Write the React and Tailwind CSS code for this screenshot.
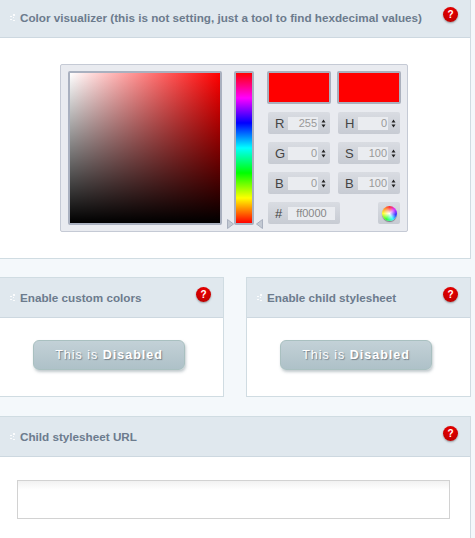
const Grip = () => (
  <svg width="5" height="7" viewBox="0 0 5 7" className="shrink-0 mr-[5px]">
    <rect x="0" y="2" width="2" height="1" fill="#fbfcfd" />
    <rect x="3" y="0" width="2" height="2" fill="#fbfcfd" />
    <rect x="3" y="3" width="1" height="1" fill="#fbfcfd" />
    <rect x="0" y="5" width="2" height="1" fill="#fbfcfd" />
    <rect x="3" y="6" width="2" height="1" fill="#fbfcfd" />
  </svg>
);

const Help = () => (
  <div className="ml-auto mr-[12px] mt-[-6px] w-[15px] h-[15px] rounded-full shrink-0 flex items-center justify-center bg-[radial-gradient(circle_at_50%_30%,#ee0000,#c40000_70%,#8f0000)] text-white text-[10px] font-bold leading-none shadow-[0_1px_2px_rgba(0,0,0,0.35)]">
    ?
  </div>
);

function Panel({ title, className, bodyClassName, children }) {
  return (
    <section className={`border border-[#d0dce2] bg-white ${className}`}>
      <header className="h-10 flex items-center pl-[10px] bg-[#e0e8ee] border-b border-[#cdd8e0]">
        <Grip />
        <h3 className="text-[11.7px] font-bold text-[#6c7b8d] whitespace-nowrap">{title}</h3>
        <Help />
      </header>
      <div className={bodyClassName}>{children}</div>
    </section>
  );
}

const Spinner = () => (
  <svg width="5" height="9" viewBox="0 0 5 9" className="shrink-0">
    <path d="M2.5 0.5 L4.5 3.5 H0.5 Z M2.5 8.5 L4.5 5.5 H0.5 Z" fill="#222" />
  </svg>
);

function Field({ label, value }) {
  return (
    <div className="w-[62px] h-[22px] flex items-center rounded-[2px] bg-[linear-gradient(#d9dce2,#c7cbd3)] pl-[7px]">
      <span className="w-[13px] text-[13px] text-[#444] leading-none">{label}</span>
      <span className="w-[30px] h-[13px] bg-[#eaecf0] text-right text-[11px] leading-[13px] text-[#999] pr-[1px]">{value}</span>
      <span className="ml-[3px]"><Spinner /></span>
    </div>
  );
}

const Swatch = () => <div className="w-[64px] h-[33px] bg-[#ff0000] border-2 border-[#aab0bd] rounded-[2px]" />;

function ColorPicker() {
  return (
    <div className="relative w-[348px] h-[168px] flex items-start pt-[6px] pl-[7px] bg-[#e9ebf0] border border-[#c5cad5] rounded-[2px]">
      <div className="w-[154px] h-[154px] border-2 border-[#a9b0bf] rounded-[2px] bg-[linear-gradient(to_top,#000,transparent),linear-gradient(to_right,#fff,#f00)]" />
      <div className="ml-[12px] w-[20px] h-[154px] border-2 border-[#a9b0bf] rounded-[2px] bg-[linear-gradient(to_bottom,#f00,#f0f,#00f,#0ff,#0f0,#ff0,#f00)]" />
      <svg width="7" height="10" viewBox="0 0 7 10" className="absolute left-[166px] top-[154px]">
        <path d="M0.5 0.5 L6.5 5 L0.5 9.5 Z" fill="#c3c9d3" stroke="#a9b0bf" />
      </svg>
      <svg width="7" height="10" viewBox="0 0 7 10" className="absolute left-[195px] top-[154px]">
        <path d="M6.5 0.5 L0.5 5 L6.5 9.5 Z" fill="#c3c9d3" stroke="#a9b0bf" />
      </svg>
      <div className="ml-[13px] flex flex-col w-[134px]">
        <div className="flex gap-[6px]">
          <Swatch />
          <Swatch />
        </div>
        <div className="mt-[8px] grid grid-cols-[62px_62px] gap-x-[8px] gap-y-[8px] ml-px">
          <Field label="R" value="255" />
          <Field label="H" value="0" />
          <Field label="G" value="0" />
          <Field label="S" value="100" />
          <Field label="B" value="0" />
          <Field label="B" value="100" />
        </div>
        <div className="mt-[8px] ml-px flex justify-between w-[132px]">
          <div className="w-[72px] h-[22px] flex items-center rounded-[2px] bg-[linear-gradient(#d9dce2,#c7cbd3)] pl-[7px]">
            <span className="w-[13px] text-[13px] text-[#444] leading-none">#</span>
            <span className="w-[47px] h-[13px] bg-[#eaecf0] text-center text-[11px] leading-[13px] text-[#888]">ff0000</span>
          </div>
          <div className="w-[22px] h-[22px] flex items-center justify-center rounded-[2px] bg-[linear-gradient(#d9dce2,#c7cbd3)]">
            <div className="w-[15px] h-[15px] rounded-full bg-[radial-gradient(circle,#fff_0%,rgba(255,255,255,0)_60%),conic-gradient(#f33,#d3f,#33f,#3ff_150deg,#3f3_210deg,#ff3_270deg,#f33)] shadow-[0_1px_1px_rgba(0,0,0,0.4)]" />
          </div>
        </div>
      </div>
    </div>
  );
}

function DisabledButton() {
  return (
    <button className="w-[152px] h-[30px] rounded-[6px] border border-[#a9c0c0] bg-[linear-gradient(#c3d1d7,#aec1c8)] shadow-[1px_2px_3px_rgba(100,120,130,0.4)] text-[12.5px] tracking-[1px] text-white [text-shadow:1px_1px_1px_rgba(90,100,110,0.7)]">
      This is <b>Disabled</b>
    </button>
  );
}

export default function App() {
  return (
    <div className="w-[475px] h-[538px] overflow-hidden bg-[#f4f8fb] font-['Liberation_Sans',Arial,sans-serif]">
      <div className="ml-[-1px] w-[472px] mt-[-3px] flex flex-col">
        <Panel title="Color visualizer (this is not setting, just a tool to find hexdecimal values)" bodyClassName="h-[220px] pl-[60px] pt-[26px]">
          <ColorPicker />
        </Panel>
        <div className="mt-[18px] flex justify-between">
          <Panel title="Enable custom colors" className="w-[225px]" bodyClassName="h-[78px] pl-[33px] pt-[22px]">
            <DisabledButton />
          </Panel>
          <Panel title="Enable child stylesheet" className="w-[225px]" bodyClassName="h-[78px] pl-[33px] pt-[22px]">
            <DisabledButton />
          </Panel>
        </div>
        <Panel title="Child stylesheet URL" className="mt-[19px]" bodyClassName="h-[120px] pl-[17px] pt-[23px]">
          <div className="w-[433px] h-[39px] border border-[#d2d2d2] bg-[linear-gradient(#f1f1f1,#fff_9px)]" />
        </Panel>
      </div>
    </div>
  );
}
